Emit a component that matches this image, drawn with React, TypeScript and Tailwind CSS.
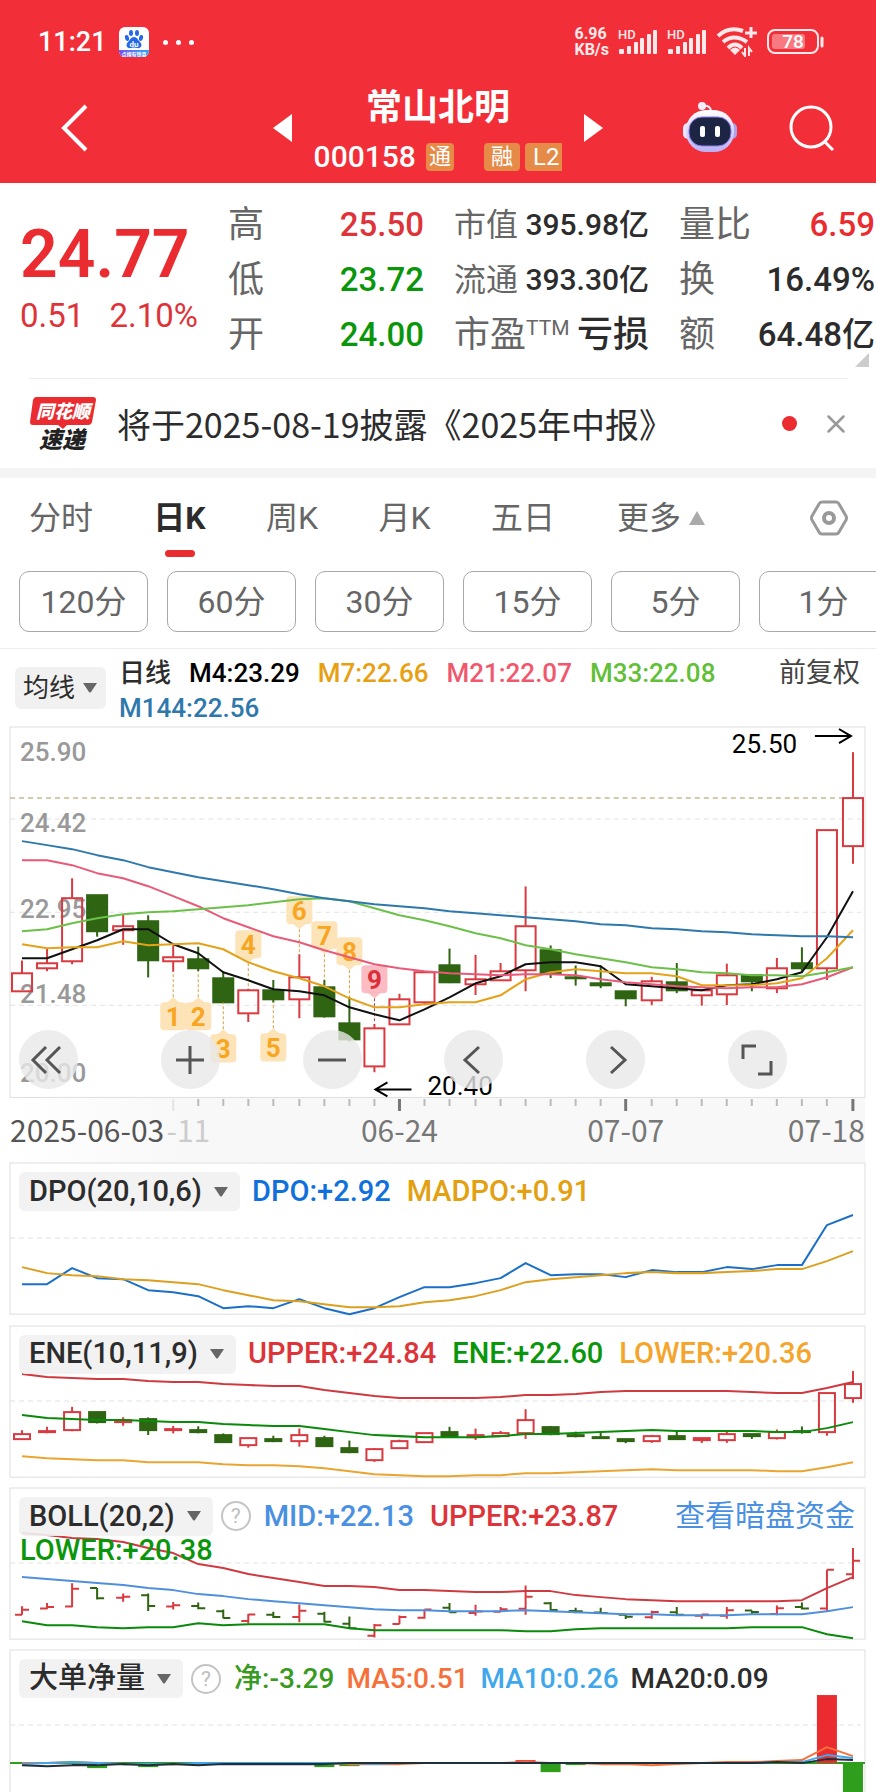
import { ReactNode } from "react";
import clsx from "clsx";
import { X } from "lucide-react";

const RED = "#d93a40";
const GREEN = "#2f6412";

// [open, high, low, close], one entry for each trading day
type Candle = [number, number, number, number];

const CANDLES: Candle[] = [
  [21.69, 22.18, 21.69, 21.98],
  [22.05, 22.37, 22.01, 22.14],
  [22.17, 23.49, 22.12, 23.18],
  [23.22, 23.22, 22.56, 22.64],
  [22.66, 22.91, 22.43, 22.72],
  [22.8, 22.9, 21.91, 22.19],
  [22.16, 22.42, 22.0, 22.23],
  [22.2, 22.4, 22.01, 22.06],
  [21.89, 22.0, 21.5, 21.51],
  [21.34, 21.73, 21.2, 21.71],
  [21.7, 21.87, 21.51, 21.56],
  [21.56, 22.28, 21.26, 21.92],
  [21.75, 21.87, 21.27, 21.29],
  [21.18, 21.6, 20.89, 20.93],
  [20.5, 21.17, 20.4, 21.1],
  [21.16, 21.65, 21.15, 21.56],
  [21.52, 22.0, 21.47, 22.0],
  [22.1, 22.37, 21.82, 21.84],
  [21.8, 22.27, 21.63, 21.88],
  [21.87, 22.14, 21.87, 22.01],
  [22.03, 23.36, 21.69, 22.72],
  [22.35, 22.42, 21.9, 21.97],
  [21.91, 22.1, 21.78, 21.89],
  [21.82, 22.1, 21.74, 21.79],
  [21.69, 21.69, 21.45, 21.58],
  [21.55, 21.92, 21.47, 21.85],
  [21.84, 22.14, 21.66, 21.7],
  [21.63, 21.71, 21.46, 21.71],
  [21.64, 22.13, 21.47, 21.95],
  [21.94, 21.94, 21.69, 21.85],
  [21.74, 22.22, 21.66, 22.06],
  [22.14, 22.39, 21.99, 22.05],
  [22.05, 24.26, 21.87, 24.26],
  [24.0, 25.5, 23.72, 24.77],
];

// line heights on the 854 wide canvas of each chart
const M144 = [114, 118, 122, 128, 133, 140, 145, 150, 154, 158, 162, 167, 171, 174, 177, 179, 181, 184, 186, 188, 190, 192, 194, 197, 198, 201, 202, 204, 205, 207, 208, 209, 209, 210];
const M33 = [204, 202, 196, 191, 187, 185, 184, 182, 180, 178, 175, 172, 171, 174, 181, 188, 193, 199, 206, 211, 218, 222, 227, 231, 235, 240, 242, 245, 246, 248, 248, 249, 245, 240];
const M21 = [133, 133, 138, 146, 151, 159, 169, 179, 191, 200, 209, 215, 223, 230, 237, 241, 244, 246, 247, 248, 247, 247, 248, 252, 255, 257, 259, 260, 261, 260, 260, 257, 250, 240];
const M7 = [217, 221, 220, 220, 214, 218, 217, 216, 222, 235, 244, 251, 259, 271, 280, 280, 277, 275, 275, 268, 252, 245, 242, 244, 246, 246, 249, 258, 258, 258, 256, 251, 231, 203];
const M4 = [231, 231, 222, 213, 202, 202, 217, 226, 245, 253, 262, 264, 268, 280, 287, 293, 282, 270, 256, 249, 237, 235, 235, 239, 257, 259, 261, 263, 258, 257, 252, 245, 210, 164];

const DPO = [121, 121, 105, 115, 116, 127, 129, 133, 145, 143, 145, 136, 145, 151, 145, 134, 124, 124, 120, 115, 100, 112, 111, 111, 114, 107, 109, 109, 104, 106, 102, 102, 62, 52];
const MADPO = [104, 110, 112, 113, 116, 117, 119, 121, 127, 132, 137, 138, 141, 144, 144, 143, 139, 137, 133, 127, 119, 116, 114, 112, 110, 109, 110, 110, 109, 108, 106, 106, 98, 88];

const ENE_UPPER = [48, 51, 52, 53, 53, 55, 56, 56, 58, 59, 60, 60, 64, 67, 70, 72, 72, 72, 72, 71, 69, 69, 68, 66, 65, 65, 65, 65, 65, 66, 67, 67, 62, 56];
const ENE_MID = [89, 92, 93, 94, 94, 95, 96, 96, 98, 99, 100, 100, 103, 106, 109, 110, 111, 111, 111, 110, 108, 108, 107, 106, 105, 104, 105, 105, 105, 105, 106, 106, 102, 96];
const ENE_LOWER = [130, 132, 133, 134, 134, 136, 136, 136, 138, 139, 139, 140, 142, 145, 148, 149, 150, 150, 149, 149, 147, 147, 146, 145, 144, 143, 144, 144, 144, 144, 145, 145, 141, 136];

const BOLL_UPPER = [45, 47, 50, 51, 54, 60, 65, 76, 80, 86, 90, 94, 98, 98, 99, 102, 102, 103, 104, 104, 103, 103, 107, 109, 111, 112, 113, 113, 113, 113, 113, 112, 100, 89];
const BOLL_MID = [89, 91, 93, 95, 97, 100, 102, 106, 108, 111, 113, 115, 117, 119, 121, 122, 122, 123, 123, 123, 122, 123, 124, 125, 126, 126, 127, 127, 127, 126, 126, 126, 123, 119];
const BOLL_LOWER = [133, 137, 137, 139, 140, 139, 139, 135, 137, 136, 136, 136, 136, 140, 142, 142, 142, 142, 142, 142, 143, 143, 141, 140, 140, 140, 140, 140, 140, 139, 139, 139, 146, 150];

const NET_MA5 = [113, 113, 112, 113, 114, 114, 114, 114, 113, 113, 113, 113, 113, 114, 114, 114, 113, 113, 113, 113, 112, 113, 113, 114, 114, 115, 114, 113, 112, 112, 111, 110, 97, 106];
const NET_MA10 = [114, 113, 112, 113, 114, 114, 114, 113, 113, 113, 113, 113, 113, 113, 114, 113, 113, 113, 113, 113, 113, 113, 113, 113, 113, 113, 113, 113, 113, 113, 112, 112, 105, 108];
const NET_MA20 = [115, 116, 115, 115, 114, 115, 114, 115, 114, 114, 114, 114, 114, 113, 113, 113, 113, 113, 113, 113, 113, 113, 113, 113, 113, 113, 113, 113, 113, 113, 112, 113, 109, 110];

const NET_BARS = [
  { day: 3, top: 115, height: 3, fill: "#2f9e1c" },
  { day: 5, top: 115, height: 2, fill: "#2f9e1c" },
  { day: 12, top: 114, height: 3, fill: "#2f9e1c" },
  { day: 13, top: 114, height: 2, fill: "#2f9e1c" },
  { day: 20, top: 110, height: 3, fill: "#ea2c31" },
  { day: 21, top: 113, height: 9, fill: "#2f9e1c" },
  { day: 22, top: 113, height: 2, fill: "#2f9e1c" },
  { day: 32, top: 45, height: 68, fill: "#ea2c31" },
  { day: 33, top: 113, height: 38, fill: "#2f9e1c" },
];

const MARKERS = [
  { n: 1, day: 6, y: 289, to: 244 },
  { n: 2, day: 7, y: 289, to: 244 },
  { n: 3, day: 8, y: 321, to: 275 },
  { n: 4, day: 9, y: 217, to: 261 },
  { n: 5, day: 10, y: 320, to: 275 },
  { n: 6, day: 11, y: 183, to: 227 },
  { n: 7, day: 12, y: 208, to: 253 },
  { n: 8, day: 13, y: 224, to: 270 },
  { n: 9, day: 14, y: 252, to: 296 },
];

const dayX = (day: number) => Math.round(12 + day * 25.14);

const Line = ({ ys, color }: { ys: number[]; color: string }) => (
  <polyline
    points={ys.map((y, i) => `${dayX(i)},${y}`).join(" ")}
    fill="none"
    stroke={color}
    strokeWidth={2}
    strokeLinejoin="round"
  />
);

const GridLine = ({ y, color = "#e2e2e2" }: { y: number; color?: string }) => (
  <line x1={0} x2={850} y1={y} y2={y} stroke={color} strokeDasharray="5 4" />
);

const Candles = ({ scale, width }: { scale: (price: number) => number; width: number }) => (
  <>
    {CANDLES.map(([open, high, low, close], i) => {
      const x = dayX(i);
      const up = close >= open;
      const top = Math.round(scale(Math.max(open, close)));
      const bottom = Math.round(scale(Math.min(open, close)));
      const color = up ? RED : GREEN;
      return (
        <g key={i} stroke={color} strokeWidth={2}>
          <line x1={x} x2={x} y1={scale(high)} y2={top} />
          <line x1={x} x2={x} y1={bottom} y2={scale(low)} />
          <rect
            x={x - width / 2 + 1}
            y={top}
            width={width - 2}
            height={Math.max(bottom - top, 1)}
            fill={up ? "none" : color}
          />
        </g>
      );
    })}
  </>
);

const PriceBars = ({ scale }: { scale: (price: number) => number }) => (
  <>
    {CANDLES.map(([open, high, low, close], i) => {
      const x = dayX(i);
      return (
        <path
          key={i}
          d={`M${x} ${scale(high)}V${scale(low)}M${x - 7} ${scale(open)}H${x}M${x} ${scale(close)}H${x + 7}`}
          stroke={close >= open ? RED : GREEN}
          strokeWidth={2}
          fill="none"
        />
      );
    })}
  </>
);

const Marker = ({ n, day, y, to }: { n: number; day: number; y: number; to: number }) => {
  const x = dayX(day);
  const below = to > y;
  const tip = below ? y + 19 : y - 19;
  const edge = below ? y + 13 : y - 13;
  const hot = n === 9;
  return (
    <g>
      <line x1={x} x2={x} y1={tip} y2={to} stroke={hot ? "#a04040" : "#d0a040"} strokeDasharray="3 2" />
      <g fill={hot ? "#f9b4bb" : "#fde0b0"} fillOpacity={0.9}>
        <rect x={x - 13} y={y - 14} width={26} height={28} rx={4} />
        <path d={`M${x - 7} ${edge}L${x} ${tip}L${x + 7} ${edge}Z`} />
      </g>
      <text x={x} y={y + 10} textAnchor="middle" fontSize={26} fontWeight={700} fill={hot ? "#dc3038" : "#f8a51f"}>
        {n}
      </text>
    </g>
  );
};

const Chart = ({ height, label, children }: { height: number; label: string; children: ReactNode }) => (
  <svg
    viewBox={`0 0 854 ${height}`}
    role="img"
    aria-label={label}
    className="block w-full h-auto overflow-visible [grid-area:1/1]"
  >
    {children}
  </svg>
);

const Frame = ({ height }: { height: number }) => (
  <rect x={0} y={0} width={854} height={height} fill="none" stroke="#dedede" strokeWidth={1} />
);

const Caret = () => (
  <svg viewBox="0 0 14 10" className="w-[14px] h-[10px]" aria-hidden="true">
    <path d="M0 0H14L8 9Q7 10 6 9Z" fill="#666" />
  </svg>
);

const IndicatorButton = ({ children }: { children: ReactNode }) => (
  <button
    type="button"
    className="flex items-center gap-3 h-[39px] pl-[10px] pr-3 rounded-md bg-[#f1f1f1]/90 text-[29px] font-medium text-[#2c2c2c] whitespace-nowrap"
  >
    {children}
    <Caret />
  </button>
);

const HelpButton = () => (
  <button
    type="button"
    aria-label="指标说明"
    className="-ml-1 mr-px w-[30px] h-[30px] rounded-full border-2 border-[#c4c4c4] text-[#bdbdbd] text-[21px] leading-[26px] text-center"
  >
    ?
  </button>
);

const Signal = () => (
  <svg viewBox="0 0 40 28" className="w-10 h-7 overflow-visible" aria-hidden="true">
    <text x={0} y={11} fontSize={13} fontWeight={500} fill="#ffe9ea">HD</text>
    <g fill="#ffe9ea">
      <rect x={1} y={21} width={5} height={5} rx={1} />
      <rect x={9} y={18} width={4} height={8} rx={1} />
      <rect x={16} y={14} width={4} height={12} rx={1} />
      <rect x={22} y={10} width={4} height={16} rx={1} />
      <rect x={29} y={6} width={4} height={20} rx={1} />
      <rect x={35} y={2} width={4} height={24} rx={1} />
    </g>
  </svg>
);

const StatusBar = () => (
  <div className="flex items-center justify-between h-[62px] pt-[22px] pl-[38px] pr-[52px] text-white">
    <div className="flex items-center">
      <span className="text-[27px] font-medium">11:21</span>
      <svg viewBox="0 0 30 30" className="ml-3 w-[30px] h-[30px]" aria-hidden="true">
        <defs>
          <linearGradient id="strip">
            <stop offset="0" stopColor="#7a4ff0" />
            <stop offset="1" stopColor="#2aa8f5" />
          </linearGradient>
          <clipPath id="tile"><rect width={30} height={30} rx={6} /></clipPath>
        </defs>
        <g clipPath="url(#tile)">
          <rect width={30} height={30} fill="#fff" />
          <rect y={23} width={30} height={7} fill="url(#strip)" />
        </g>
        <g fill="#2468e8">
          <ellipse cx={8} cy={11} rx={2} ry={3} transform="rotate(-15 8 11)" />
          <ellipse cx={12} cy={6} rx={2} ry={3} />
          <ellipse cx={18} cy={6} rx={2} ry={3} />
          <ellipse cx={22} cy={11} rx={2} ry={3} transform="rotate(15 22 11)" />
          <path d="M15 10C18 10 19 13 21 15C24 18 22 22 18 21Q15 20 12 21C8 22 6 18 9 15C11 13 12 10 15 10Z" />
        </g>
        <text x={15} y={20} fontSize={8} fontWeight={700} textAnchor="middle" fill="#fff">du</text>
        <text x={15} y={29} fontSize={5} fontWeight={700} textAnchor="middle" fill="#fff">点搜有惊喜</text>
      </svg>
      <div className="flex gap-2 ml-[14px]">
        <i className="w-[5px] h-[5px] rounded-full bg-white" />
        <i className="w-[5px] h-[5px] rounded-full bg-white" />
        <i className="w-[5px] h-[5px] rounded-full bg-white" />
      </div>
    </div>
    <div className="flex items-center gap-[9px]">
      <p className="flex flex-col text-[16px] leading-4 font-bold text-[#ffe9ea]">
        <span>6.96</span>
        <span>KB/s</span>
      </p>
      <Signal />
      <Signal />
      <svg viewBox="0 0 42 30" className="w-[42px] h-[30px]" fill="none" stroke="#ffe9ea" strokeWidth={4} aria-hidden="true">
        <path d="M2 9Q13 -1 27 4M7 15Q18 6 31 15M12 21Q19 14 26 21" />
        <path d="M14 23Q19 18 24 23L19 28Z" fill="#ffe9ea" stroke="none" />
        <path d="M35 0V11M29 6H41" strokeWidth={3} />
        <path d="M29 21V29L26 25M33 29V21L36 25" strokeWidth={2} />
      </svg>
      <svg viewBox="0 0 57 26" className="w-[57px] h-[26px]" aria-hidden="true">
        <rect x={1} y={1} width={50} height={23} rx={7} fill="none" stroke="#ffe9ea" strokeWidth={2} />
        <rect x={5} y={5} width={33} height={15} rx={3} fill="#f87a80" />
        <path d="M55 9V17" stroke="#ffe9ea" strokeWidth={3} strokeLinecap="round" />
        <text x={26} y={19} fontSize={19} fontWeight={500} textAnchor="middle" fill="#fff">78</text>
      </svg>
    </div>
  </div>
);

const Header = () => (
  <header className="bg-[#f22f38] text-white">
    <StatusBar />
    <div className="grid grid-cols-[1fr_330px_1fr] items-center pt-[22px] pb-3">
      <div className="pl-[60px]">
        <button type="button" aria-label="返回" className="block">
          <svg viewBox="0 0 28 50" className="w-7 h-[50px]" fill="none" stroke="#fff" strokeWidth={4}>
            <path d="M26 3L4 25L26 47" />
          </svg>
        </button>
      </div>
      <div className="flex items-center justify-between">
        <button type="button" aria-label="上一只">
          <svg viewBox="0 0 19 28" className="w-[19px] h-7 fill-white"><path d="M19 0V28L0 14Z" /></svg>
        </button>
        <div className="flex flex-col items-center gap-[11px]">
          <h1 className="text-[36px] leading-[48px] font-bold">常山北明</h1>
          <div className="flex items-center h-7 text-[22px] leading-7">
            <span className="text-[30px] font-medium">000158</span>
            <span className="ml-[10px] px-[3px] rounded-sm bg-[#e68a48]">通</span>
            <span className="ml-[30px] px-[7px] rounded-sm bg-[#e68a48]">融</span>
            <span className="ml-[5px] pl-2 pr-[3px] text-[24px] rounded-l-sm bg-[#e68a48]">L2</span>
          </div>
        </div>
        <button type="button" aria-label="下一只">
          <svg viewBox="0 0 19 28" className="w-[19px] h-7 fill-white"><path d="M0 0V28L19 14Z" /></svg>
        </button>
      </div>
      <div className="flex items-center justify-end gap-[50px] pr-[42px]">
        <button type="button" aria-label="智能助手">
          <svg viewBox="0 0 56 52" className="w-14 h-[52px]">
            <defs>
              <linearGradient id="shell" x2="0" y2="1">
                <stop offset="0" stopColor="#fff" />
                <stop offset="1" stopColor="#b9b0f4" />
              </linearGradient>
            </defs>
            <path d="M29 9Q28 3 21 4" fill="none" stroke="#efe9ff" strokeWidth={2} />
            <circle cx={20} cy={4} r={4} fill="#f3edff" />
            <rect x={1} y={21} width={10} height={16} rx={5} fill="#e9e6ff" />
            <rect x={45} y={21} width={10} height={16} rx={5} fill="#a9a4ee" />
            <rect x={4} y={8} width={48} height={42} rx={20} fill="url(#shell)" />
            <rect x={7} y={15} width={42} height={29} rx={13} fill="#1d2545" stroke="#8f7cf0" />
            <rect x={18} y={24} width={5} height={11} rx={2} fill="#fff" />
            <rect x={33} y={24} width={5} height={11} rx={2} fill="#fff" />
          </svg>
        </button>
        <button type="button" aria-label="搜索">
          <svg viewBox="0 0 46 46" className="w-[46px] h-[46px]" fill="none" stroke="#fff" strokeWidth={3}>
            <circle cx={23} cy={22} r={20} />
            <path d="M36 36L45 45" />
          </svg>
        </button>
      </div>
    </div>
  </header>
);

type StatProps = { label: ReactNode; value: string; tone?: string };

const Stat = ({ label, value, tone = "text-[#2c2c2c] text-[33px]" }: StatProps) => (
  <div className="flex items-center justify-between h-[55px] whitespace-nowrap">
    <dt className="text-[#666]">{label}</dt>
    <dd className={clsx("font-medium", tone)}>{value}</dd>
  </div>
);

const Quote = () => (
  <section className="relative grid grid-cols-[178fr_196fr_195fr_196fr] gap-x-[30px] pl-5 pr-px pt-[14px] pb-4">
    <div className="text-[#dd343a] whitespace-nowrap">
      <p className="pt-[25px] text-[66px] leading-[66px] font-semibold text-[#ea2c31]">24.77</p>
      <p className="flex justify-between mt-2 text-[33px] leading-10">
        <span>0.51</span>
        <span>2.10%</span>
      </p>
    </div>
    <dl className="text-[36px]">
      <Stat label="高" value="25.50" tone="text-[#dd343a] text-[33px]" />
      <Stat label="低" value="23.72" tone="text-[#0a960a] text-[33px]" />
      <Stat label="开" value="24.00" tone="text-[#0a960a] text-[33px]" />
    </dl>
    <dl className="text-[32px]">
      <Stat label="市值" value="395.98亿" tone="text-[#2c2c2c] text-[30px]" />
      <Stat label="流通" value="393.30亿" tone="text-[#2c2c2c] text-[30px]" />
      <Stat
        label={
          <span className="flex text-[36px]">
            市盈<span className="text-[21px] leading-10">TTM</span>
          </span>
        }
        value="亏损"
        tone="text-[#2c2c2c] text-[36px]"
      />
    </dl>
    <dl className="text-[36px]">
      <Stat label="量比" value="6.59" tone="text-[#ea2c31] text-[33px]" />
      <Stat label="换" value="16.49%" />
      <Stat label="额" value="64.48亿" />
    </dl>
    <svg viewBox="0 0 14 14" className="absolute right-[7px] bottom-[11px] w-[14px] h-[14px]" aria-hidden="true">
      <path d="M14 0V14H0Z" fill="#ccc" />
    </svg>
  </section>
);

const News = () => (
  <section className="border-b-[10px] border-[#f4f4f4]">
    <div className="flex items-center mx-[29px] h-[90px] border-t border-[#ececec] text-[#2c2c2c]">
      <svg viewBox="0 0 68 62" className="w-[68px] h-[62px] shrink-0" role="img" aria-label="同花顺速递">
        <path d="M7 4H64Q67 4 67 7L63 29Q62 32 59 32H38L34 36L29 32H4Q1 32 1 29L4 7Q5 4 7 4Z" fill="#ea2c31" />
        <text x={34} y={25} fontSize={18} fontWeight={900} fontStyle="italic" textAnchor="middle" fill="#fff">同花顺</text>
        <text x={33} y={55} fontSize={23} fontWeight={900} fontStyle="italic" textAnchor="middle" fill="#222">速递</text>
      </svg>
      <a href="#report" className="ml-5 flex-1 font-['Noto_Sans_CJK_SC',sans-serif] text-[34px] leading-[46px] whitespace-nowrap">
        将于2025-08-19披露《2025年中报》
      </a>
      <i className="w-[15px] h-[15px] rounded-full bg-[#ea2c31]" />
      <button type="button" aria-label="关闭" className="-mr-1 ml-6 text-[#999]">
        <X size={30} strokeWidth={2} />
      </button>
    </div>
  </section>
);

const TABS = ["分时", "日K", "周K", "月K", "五日"];
const PERIODS = ["120分", "60分", "30分", "15分", "5分", "1分"];

const Periods = () => (
  <nav className="border-b border-[#ececec]">
    <div className="flex items-center h-20 pl-[29px] pr-7 text-[32px] text-[#666]">
      <div className="flex flex-1 justify-between max-w-[526px]">
        {TABS.map((tab) => (
          <button
            key={tab}
            type="button"
            className={clsx("relative whitespace-nowrap", tab === "日K" && "font-bold text-[#2c2c2c]")}
          >
            {tab}
            {tab === "日K" && (
              <i className="absolute left-1/2 -translate-x-1/2 -bottom-[15px] w-[30px] h-[7px] rounded-full bg-[#ea2c31]" />
            )}
          </button>
        ))}
      </div>
      <button type="button" className="flex items-center gap-2 ml-[62px] whitespace-nowrap">
        更多
        <svg viewBox="0 0 16 14" className="w-4 h-[14px] fill-[#aaa]"><path d="M8 0L16 14H0Z" /></svg>
      </button>
      <button type="button" aria-label="设置" className="ml-auto">
        <svg viewBox="0 0 38 36" className="w-[38px] h-9" fill="none" stroke="#999" strokeWidth={3} strokeLinejoin="round">
          <path d="M12 2H26Q28 2 29 4L36 16Q37 18 36 20L29 32Q28 34 26 34H12Q10 34 9 32L2 20Q1 18 2 16L9 4Q10 2 12 2Z" />
          <circle cx={19} cy={18} r={5} strokeWidth={4} />
        </svg>
      </button>
    </div>
    <div className="flex gap-[19px] pl-[19px] pt-[13px] pb-4 overflow-hidden">
      {PERIODS.map((period) => (
        <button
          key={period}
          type="button"
          className="shrink-0 w-[129px] h-[61px] rounded-[10px] border border-[#a8a8a8] text-[32px] text-[#666]"
        >
          {period}
        </button>
      ))}
    </div>
  </nav>
);

const Averages = () => (
  <div className="flex items-start pl-[15px] pr-4 pt-[7px] pb-px text-[26px] font-medium">
    <button
      type="button"
      className="flex items-center gap-2 mt-[11px] h-[42px] pl-2 pr-[9px] rounded-md bg-[#f1f1f1] font-normal text-[#2c2c2c] whitespace-nowrap"
    >
      均线
      <Caret />
    </button>
    <div className="flex flex-1 flex-wrap gap-x-[18px] ml-[13px] leading-[35px] whitespace-nowrap">
      <span className="text-[#2c2c2c]">日线</span>
      <span className="text-black">M4:23.29</span>
      <span className="text-[#e8a010]">M7:22.66</span>
      <span className="text-[#f0586e]">M21:22.07</span>
      <span className="text-[#62bf38]">M33:22.08</span>
      <span className="text-[#2e78ac]">M144:22.56</span>
    </div>
    <button type="button" className="text-[27px] leading-[35px] font-normal text-[#444] whitespace-nowrap">前复权</button>
  </div>
);

const TOOLS = [
  { label: "最早", path: "M16 6L3 19L16 32M30 6L17 19L30 32" },
  { label: "放大", path: "M19 5V33M5 19H33" },
  { label: "缩小", path: "M5 19H33" },
  { label: "左移", path: "M24 6L10 19L24 32" },
  { label: "右移", path: "M14 6L28 19L14 32" },
  { label: "全屏", path: "M5 18V5H18M33 20V33H20" },
];

const AXIS_PRICES = [
  { price: "25.90", y: 34 },
  { price: "24.42", y: 105 },
  { price: "22.95", y: 191 },
  { price: "21.48", y: 276 },
  { price: "20.00", y: 355 },
];

const MainChart = () => {
  const scale = (price: number) => (25.9 - price) * 62.7;
  return (
    <div className="relative grid">
      <Chart height={370} label="日K线">
        <Frame height={370} />
        <GridLine y={92} />
        <GridLine y={185} />
        <GridLine y={278} />
        <GridLine y={71} color="#a89a58" />
        <g fontSize={26} fontWeight={500} fill="#999">
          {AXIS_PRICES.map(({ price, y }) => (
            <text key={price} x={10} y={y}>{price}</text>
          ))}
        </g>
        <Candles scale={scale} width={22} />
        {MARKERS.map((marker) => (
          <Marker key={marker.n} {...marker} />
        ))}
        <Line ys={M4} color="#111" />
        <Line ys={M7} color="#e3a21a" />
        <Line ys={M21} color="#e85a78" />
        <Line ys={M33} color="#6cc04a" />
        <Line ys={M144} color="#2e78ac" />
        <g fontSize={26}>
          <text x={721} y={26}>25.50</text>
          <text x={417} y={368}>20.40</text>
        </g>
        <g fill="none" stroke="#000" strokeWidth={2}>
          <path d="M804 9H840M828 2L840 9L828 16" />
          <path d="M401 362H365M377 355L365 362L377 369" />
        </g>
      </Chart>
      <div className="absolute left-[9px] right-[78px] bottom-2 flex justify-between">
        {TOOLS.map(({ label, path }) => (
          <button
            key={label}
            type="button"
            aria-label={label}
            className="flex items-center justify-center w-[59px] h-[59px] rounded-full bg-[#e8e8e8]/80 text-[#555]"
          >
            <svg viewBox="0 0 38 38" className="w-[38px] h-[38px]" fill="none" stroke="currentColor" strokeWidth={3}>
              <path d={path} />
            </svg>
          </button>
        ))}
      </div>
    </div>
  );
};

const DateAxis = () => (
  <Chart height={66} label="日期">
    <defs>
      <linearGradient id="axis">
        <stop offset="0" stopColor="#fff" />
        <stop offset="0.2" stopColor="#f8f8f8" />
      </linearGradient>
    </defs>
    <rect y={1} width={854} height={64} fill="url(#axis)" />
    {CANDLES.slice(7).map((_, i) => {
      const day = i + 7;
      const major = day === 15 || day === 24 || day === 33;
      return (
        <line
          key={day}
          x1={dayX(day)}
          x2={dayX(day)}
          y1={2}
          y2={major ? 14 : 9}
          stroke={major ? "#777" : "#bbb"}
          strokeWidth={major ? 3 : 2}
        />
      );
    })}
    <line x1={163} x2={163} y1={2} y2={14} stroke="#e4e4e4" strokeWidth={2} />
    <g fontSize={30} fill="#777" className="font-['Noto_Sans_CJK_SC',sans-serif]">
      <text x={200} y={45} textAnchor="end" fill="#ccc">-11</text>
      <text x={0} y={45} fill="#555">2025-06-03</text>
      <text x={389} y={45} textAnchor="middle">06-24</text>
      <text x={615} y={45} textAnchor="middle">07-07</text>
      <text x={854} y={45} textAnchor="end">07-18</text>
    </g>
  </Chart>
);

const Legend = ({ children }: { children: ReactNode }) => (
  <div className="flex items-center gap-3 h-12 pt-[9px] pl-[9px] pr-[10px]">{children}</div>
);

const Values = ({ tight, children }: { tight?: boolean; children: ReactNode }) => (
  <p className={clsx("flex font-medium whitespace-nowrap", tight ? "gap-3 text-[28px]" : "gap-4 text-[29px]")}>
    {children}
  </p>
);

const Indicators = () => (
  <div className="flex flex-col gap-[11px]">
    <section className="grid">
      <Chart height={151} label="DPO">
        <Frame height={151} />
        <GridLine y={75} />
        <Line ys={DPO} color="#1c6fc8" />
        <Line ys={MADPO} color="#dba020" />
      </Chart>
      <div className="relative [grid-area:1/1]">
        <Legend>
          <IndicatorButton>DPO(20,10,6)</IndicatorButton>
          <Values>
            <span className="text-[#1070dc]">DPO:+2.92</span>
            <span className="text-[#e3a010]">MADPO:+0.91</span>
          </Values>
        </Legend>
      </div>
    </section>

    <section className="grid">
      <Chart height={151} label="ENE">
        <Frame height={151} />
        <GridLine y={75} />
        <Candles scale={(price) => 58 + (24.77 - price) * 17.8} width={18} />
        <Line ys={ENE_UPPER} color="#cf3a40" />
        <Line ys={ENE_MID} color="#0a8a0a" />
        <Line ys={ENE_LOWER} color="#eaa530" />
      </Chart>
      <div className="relative [grid-area:1/1]">
        <Legend>
          <IndicatorButton>ENE(10,11,9)</IndicatorButton>
          <Values>
            <span className="text-[#dd343a]">UPPER:+24.84</span>
            <span className="text-[#0a960a]">ENE:+22.60</span>
            <span className="text-[#f5a52c]">LOWER:+20.36</span>
          </Values>
        </Legend>
      </div>
    </section>

    <section className="grid">
      <Chart height={151} label="BOLL">
        <Frame height={151} />
        <GridLine y={75} />
        <PriceBars scale={(price) => 60 + (25.5 - price) * 17.5} />
        <Line ys={BOLL_UPPER} color="#cf3a40" />
        <Line ys={BOLL_MID} color="#4f90dd" />
        <Line ys={BOLL_LOWER} color="#0a8a0a" />
      </Chart>
      <div className="relative [grid-area:1/1]">
        <Legend>
          <IndicatorButton>BOLL(20,2)</IndicatorButton>
          <HelpButton />
          <Values>
            <span className="text-[#4a90e2]">MID:+22.13</span>
            <span className="text-[#dd343a]">UPPER:+23.87</span>
          </Values>
          <a href="#funds" className="ml-auto text-[30px] leading-9 text-[#4a90e2] whitespace-nowrap">查看暗盘资金</a>
        </Legend>
        <p className="pl-[10px] text-[29px] leading-7 font-medium text-[#0a960a]">LOWER:+20.38</p>
      </div>
    </section>

    <section className="grid">
      <Chart height={143} label="大单净量">
        <path d="M0 143V0H854V143" fill="none" stroke="#dedede" strokeWidth={1} />
        <GridLine y={75} />
        <line x1={0} x2={854} y1={113} y2={113} stroke="#2f9e1c" strokeWidth={2} />
        {NET_BARS.map(({ day, top, height, fill }) => (
          <rect key={day} x={dayX(day) - 10} y={top} width={20} height={height} fill={fill} />
        ))}
        <Line ys={NET_MA5} color="#f5703a" />
        <Line ys={NET_MA10} color="#40a8ea" />
        <Line ys={NET_MA20} color="#20303a" />
      </Chart>
      <div className="relative [grid-area:1/1]">
        <Legend>
          <IndicatorButton>大单净量</IndicatorButton>
          <HelpButton />
          <Values tight>
            <span className="text-[#389a20]">净:-3.29</span>
            <span className="text-[#f5703a]">MA5:0.51</span>
            <span className="text-[#40a8ea]">MA10:0.26</span>
            <span className="text-[#2c2c2c]">MA20:0.09</span>
          </Values>
        </Legend>
      </div>
    </section>
  </div>
);

export default function App() {
  return (
    <div className="w-full bg-white overflow-hidden font-[Roboto,'Noto_Sans_CJK_SC',sans-serif]">
      <Header />
      <main>
        <Quote />
        <News />
        <Periods />
        <Averages />
        <div className="pl-[10px] pr-[11px]">
          <MainChart />
          <DateAxis />
          <Indicators />
        </div>
      </main>
    </div>
  );
}
